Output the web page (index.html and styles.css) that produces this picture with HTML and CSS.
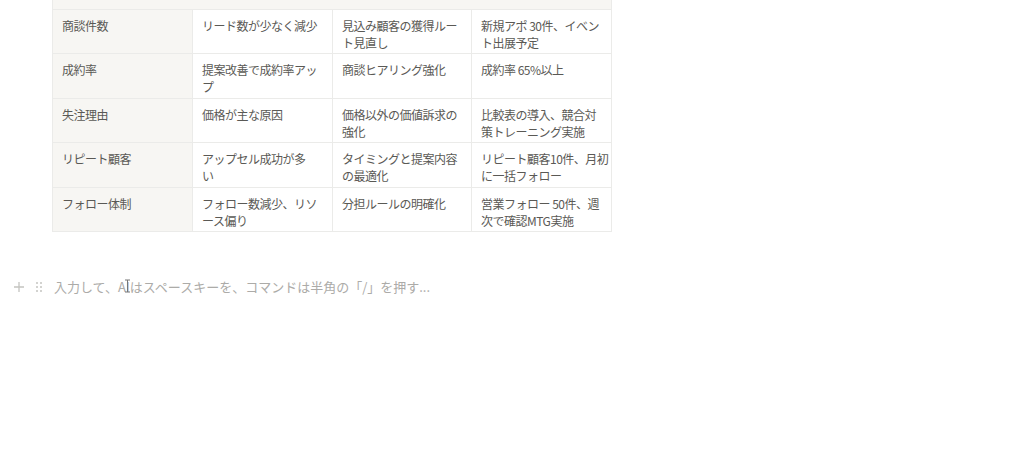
FILE: index.html
```html
<!DOCTYPE html>
<html lang="ja">
<head>
<meta charset="utf-8">
<link rel="stylesheet" href="styles.css">
</head>
<body>
<div class="page">
  <div class="table-wrap">
    <div class="head-strip"></div>
    <table class="grid">
      <colgroup><col class="c1"><col class="c2"><col class="c3"><col class="c4"></colgroup>
      <tr><td class="rh">商談件数</td><td>リード数が少なく減少</td><td>見込み顧客の獲得ルー<br>ト見直し</td><td>新規アポ 30件、イベン<br>ト出展予定</td></tr>
      <tr><td class="rh">成約率</td><td>提案改善で成約率アッ<br>プ</td><td>商談ヒアリング強化</td><td>成約率 65%以上</td></tr>
      <tr><td class="rh">失注理由</td><td>価格が主な原因</td><td>価格以外の価値訴求の<br>強化</td><td>比較表の導入、競合対<br>策トレーニング実施</td></tr>
      <tr><td class="rh">リピート顧客</td><td>アップセル成功が多<br>い</td><td>タイミングと提案内容<br>の最適化</td><td>リピート顧客10件、月初<br>に一括フォロー</td></tr>
      <tr><td class="rh">フォロー体制</td><td>フォロー数減少、リソ<br>ース偏り</td><td>分担ルールの明確化</td><td>営業フォロー 50件、週<br>次で確認MTG実施</td></tr>
    </table>
  </div>
  <div class="block">
    <span class="handle plus"><svg width="12" height="12" viewBox="0 0 12 12"><path d="M6 1v10M1 6h10" stroke="#c4c4c0" stroke-width="1.3" fill="none"/></svg></span>
    <span class="handle drag"><svg width="8" height="12" viewBox="0 0 8 12"><g fill="#c4c4c0"><circle cx="2" cy="2" r="1"/><circle cx="6" cy="2" r="1"/><circle cx="2" cy="6" r="1"/><circle cx="6" cy="6" r="1"/><circle cx="2" cy="10" r="1"/><circle cx="6" cy="10" r="1"/></g></svg></span>
    <span class="placeholder">入力して、A<span class="cur">I<svg class="ibeam" width="7" height="14" viewBox="0 0 7 14"><path d="M1 1h5M1 13h5M3.5 1v12" stroke="#777" stroke-width="1" fill="none"/></svg></span>はスペースキーを、コマンドは半角の「/」を押す...</span>
  </div>
</div>
</body>
</html>
```

FILE: styles.css
```css
html, body {
  margin: 0;
  padding: 0;
  background: #ffffff;
}
.page {
  width: 1024px;
  height: 458px;
  overflow: hidden;
  font-family: "Noto Sans CJK JP", "Noto Sans", sans-serif;
  font-size: 12px;
  color: #5a5955;
}
.table-wrap {
  margin-left: 52px;
  width: 560px;
}
.head-strip {
  height: 9px;
  background: #f7f6f3;
  border-left: 1px solid #ebebe9;
  border-right: 1px solid #ebebe9;
  box-sizing: border-box;
}
.grid {
  border-collapse: collapse;
  table-layout: fixed;
  width: 560px;
}
.grid col.c1, .grid col.c2, .grid col.c4 { width: 140px; }
.grid col.c3 { width: 139px; }
.grid td {
  border: 1px solid #ebebe9;
  padding: 7px 8px 2.4px 9px;
  height: 34px;
  line-height: 17px;
  vertical-align: top;
  white-space: nowrap;
  letter-spacing: -0.5px;
}
.grid td.rh {
  background: #f7f6f3;
}
.block {
  display: flex;
  align-items: center;
  margin-top: 45px;
  height: 20px;
  padding-left: 12px;
}
.handle {
  display: flex;
  align-items: center;
  justify-content: center;
}
.plus {
  width: 14px;
}
.drag {
  width: 10px;
  margin-left: 8px;
}
.placeholder {
  margin-left: 10px;
  color: #acaba8;
  white-space: nowrap;
  font-size: 13px;
}
.cur {
  position: relative;
}
.ibeam {
  position: absolute;
  left: -2px;
  top: 2px;
}
```
